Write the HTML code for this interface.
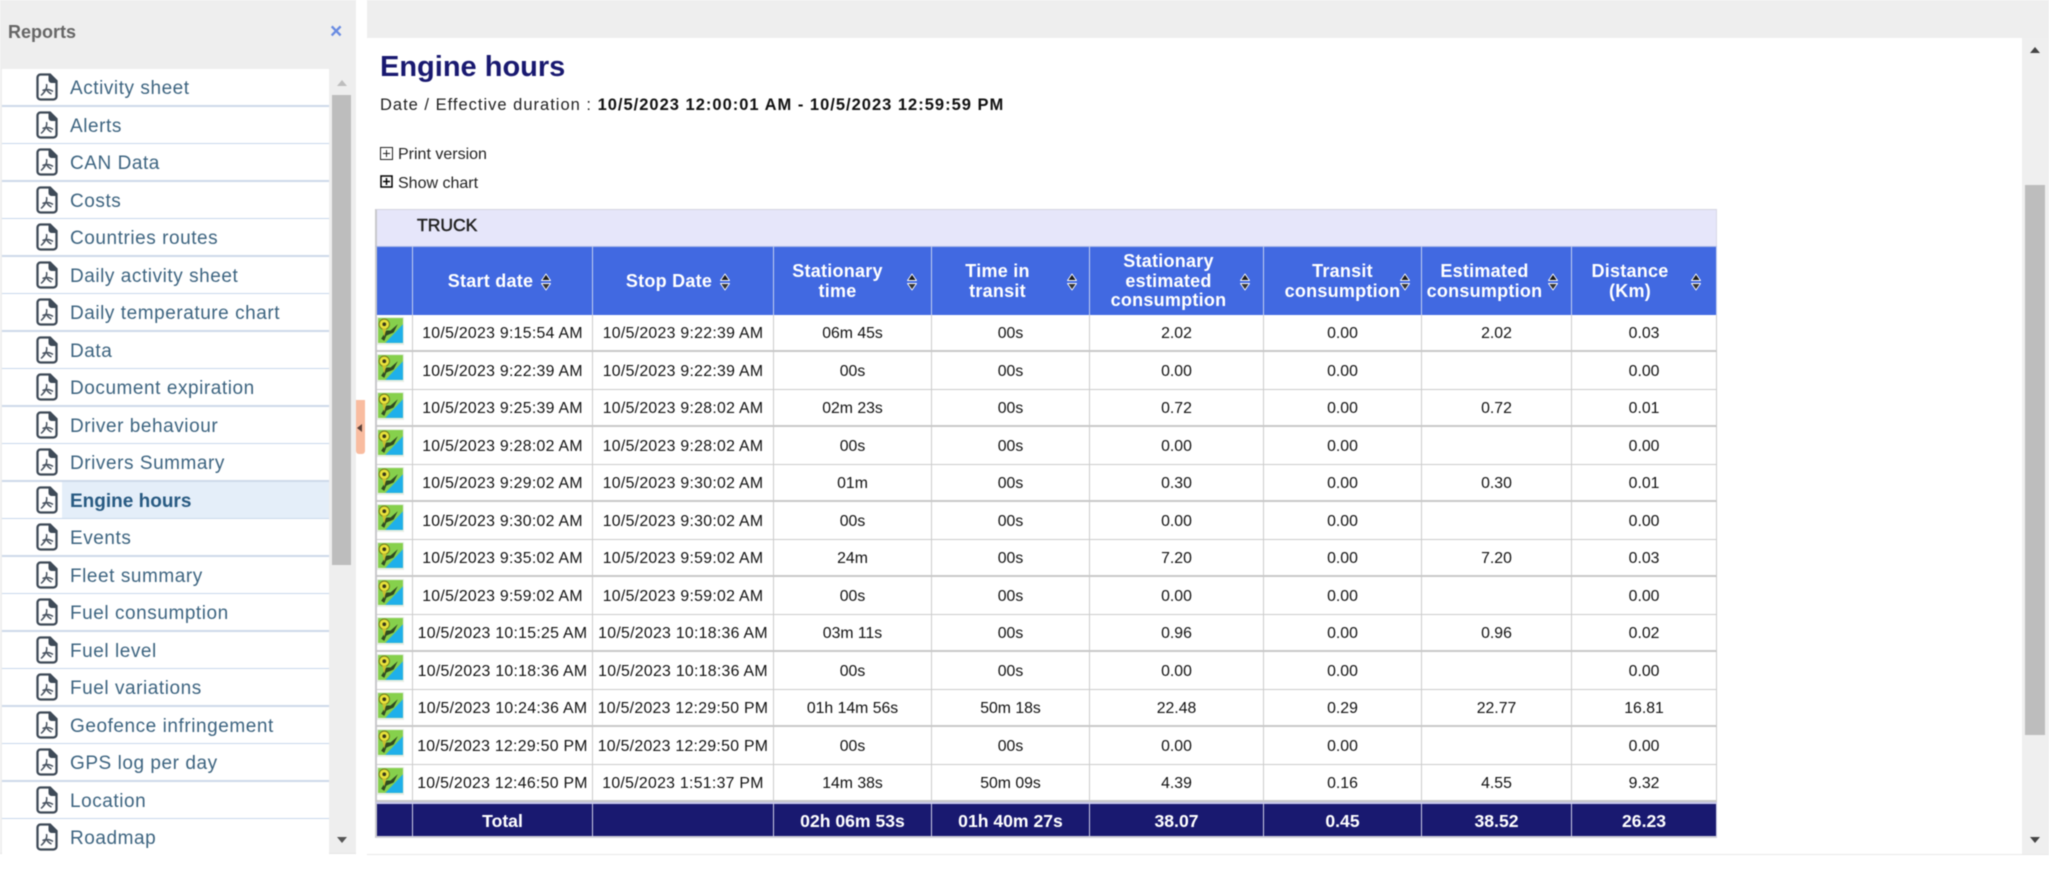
<!DOCTYPE html>
<html><head><meta charset="utf-8"><title>Engine hours</title>
<style>
*{box-sizing:border-box}
html,body{margin:0;padding:0;background:#fff}
body{width:2049px;height:879px;overflow:hidden;position:relative;font-family:"Liberation Sans",sans-serif}
.a{position:absolute}
#side{left:0;top:0;width:356px;height:854px;background:#eee;border-bottom:1px solid #e4e4e4}
#list{left:2px;top:69px;width:327px;height:785px;background:#fff;overflow:hidden}
.it{height:37.5px;position:relative;border-bottom:1px solid #c9d8ec;font-size:19px;line-height:39px;color:#3d6480;padding-left:68px;white-space:nowrap;letter-spacing:.55px}
.it:nth-child(odd){border-bottom:2px solid #cdd9ea}
.it svg{position:absolute;left:34px;top:4px;width:22px;height:28px}
.it.sel{background:linear-gradient(90deg,#fff 60px,#e4eef9 60px);font-weight:bold;color:#285a82;letter-spacing:0}
#top{left:367px;top:0;width:1682px;height:38px;background:#eee}
#sb2{left:2022px;top:38px;width:27px;height:816px;background:#efefef}
#bot{left:367px;top:854px;width:1682px;height:1px;background:#e8e8e8}
table{position:absolute;left:375px;top:209px;width:1342px;table-layout:fixed;border-collapse:separate;border-spacing:0;font-family:"Liberation Sans",sans-serif}
td,th{padding:0;text-align:center;font-size:15.8px;color:#111;white-space:nowrap;border-right:1px solid #ccc;position:relative;overflow:visible}
td:first-child,th:first-child{border-left:2px solid #c8c8cc}
td:nth-child(2),td:nth-child(3){letter-spacing:.3px}
tr.r1 td,tr.r2 td{padding-top:2px}
.g td{height:37px;background:#e6e6fa;text-align:left;font-weight:normal;border-right:1px solid #d8d8e6;border-top:1px solid #d4d4e0;font-size:17.5px;padding:0 0 6px 40px;color:#222;-webkit-text-stroke:.5px #222}
th{background:#4169e1;color:#fff;height:69px;font-size:18px;line-height:19.5px;letter-spacing:.25px;font-weight:bold;border-right:1px solid #c4d0ee;border-top:1px solid #aab8e4;padding-top:1px}
tr.t td{border-bottom:1px solid #ccc}
tr.u td{border-bottom:2px solid #c8c8c8}
tr.r1 td{height:37px}
tr.r2 td{height:38px}
tr.f td{height:36px;background:#191970;color:#fff;font-weight:bold;font-size:17.6px;letter-spacing:0;border-right:1px solid #cfcfe6;border-top:2px solid #c8c8ec;border-bottom:2px solid #d0d0d8;padding-top:2px}
.m{position:absolute;left:0;top:2px;width:27px;height:28px}
.s{position:absolute;top:26px;width:10px;height:18px}
.x{white-space:nowrap}
</style></head>
<body style="filter:blur(.4px)">
<svg width="0" height="0" style="position:absolute">
<symbol id="p" viewBox="0 0 22 28"><path d="M4.5 1.5H14L20.5 8V23.5A3 3 0 0 1 17.500 26.500H4.500A3 3 0 0 1 1.500 23.500V4.500A3 3 0 0 1 4.500 1.500Z" fill="#fff" stroke="#3e4a57" stroke-width="2.300"/><path d="M13.500 1.500V7A2 2 0 0 0 15.500 9H20.500" fill="#3e4a57" stroke="#3e4a57" stroke-width="2"/><path d="M10.500 11C11.500 15 9.500 18.500 5 22.500M6.500 17.500C10 16 14 16.500 17 18.500M10 15C11 18 13 20 15.500 21" fill="none" stroke="#4a5562" stroke-width="1.500"/></symbol>
<symbol id="m" viewBox="0 0 26 27"><rect width="26" height="27" fill="#e8eee6"/><rect x="1" y="1" width="24" height="24" fill="#86d04c"/><path d="M25 7V25H8Z" fill="#1fb0ea"/><path d="M4 21L9 13L13 13L20 7L16 15L9 18L7 23Z" fill="#2f4a20"/><circle cx="7" cy="7" r="5" fill="#e8e23a" stroke="#77801c"/><circle cx="7" cy="7" r="1.800" fill="#3a3a1a"/><path d="M5 11L7 19L9 11Z" fill="#c8c030"/></symbol>
<symbol id="s" viewBox="0 0 10 18"><path d="M5 1L9.500 7.500H.5Z" fill="#1c1c1c" stroke="#fff" stroke-width=".9" stroke-linejoin="round"/><path d="M5 17L9.500 10.500H.5Z" fill="#333" stroke="#fff" stroke-width=".9" stroke-linejoin="round"/></symbol>
</svg>

<div class="a" id="side"></div>
<div class="a" style="left:8px;top:22px;font-size:18px;font-weight:bold;color:#666">Reports</div>
<div class="a" style="left:330px;top:19px;font-size:21px;font-weight:bold;color:#6a8ce2;line-height:26px">×</div>
<div class="a" id="list">
<div class="it"><svg><use href="#p"/></svg>Activity sheet</div>
<div class="it"><svg><use href="#p"/></svg>Alerts</div>
<div class="it"><svg><use href="#p"/></svg>CAN Data</div>
<div class="it"><svg><use href="#p"/></svg>Costs</div>
<div class="it"><svg><use href="#p"/></svg>Countries routes</div>
<div class="it"><svg><use href="#p"/></svg>Daily activity sheet</div>
<div class="it"><svg><use href="#p"/></svg>Daily temperature chart</div>
<div class="it"><svg><use href="#p"/></svg>Data</div>
<div class="it"><svg><use href="#p"/></svg>Document expiration</div>
<div class="it"><svg><use href="#p"/></svg>Driver behaviour</div>
<div class="it"><svg><use href="#p"/></svg>Drivers Summary</div>
<div class="it sel"><svg><use href="#p"/></svg>Engine hours</div>
<div class="it"><svg><use href="#p"/></svg>Events</div>
<div class="it"><svg><use href="#p"/></svg>Fleet summary</div>
<div class="it"><svg><use href="#p"/></svg>Fuel consumption</div>
<div class="it"><svg><use href="#p"/></svg>Fuel level</div>
<div class="it"><svg><use href="#p"/></svg>Fuel variations</div>
<div class="it"><svg><use href="#p"/></svg>Geofence infringement</div>
<div class="it"><svg><use href="#p"/></svg>GPS log per day</div>
<div class="it"><svg><use href="#p"/></svg>Location</div>
<div class="it"><svg><use href="#p"/></svg>Roadmap</div>
</div>
<div class="a" style="left:332px;top:95px;width:19px;height:470px;background:#bdbdbd"></div>
<svg class="a" style="left:336px;top:79px" width="12" height="8"><path d="M6 1L11 7H1Z" fill="#bdbdbd"/></svg>
<svg class="a" style="left:336px;top:836px" width="12" height="8"><path d="M6 7L11 1H1Z" fill="#555"/></svg>
<div class="a" style="left:356px;top:400px;width:9px;height:54px;background:#f9bca0;border-radius:0 0 3px 3px"></div>
<svg class="a" style="left:356px;top:422px" width="8" height="12"><path d="M1 6L6 2V10Z" fill="#5a4038"/></svg>

<div class="a" id="top"></div>
<div class="a" id="sb2"></div>
<div class="a" style="left:2025px;top:185px;width:20px;height:550px;background:#bdbdbd"></div>
<svg class="a" style="left:2029px;top:46px" width="12" height="8"><path d="M6 1L11 7H1Z" fill="#444"/></svg>
<svg class="a" style="left:2029px;top:836px" width="12" height="8"><path d="M6 7L11 1H1Z" fill="#444"/></svg>
<div class="a" id="bot"></div>

<div class="a" style="left:380px;top:50px;font-size:29px;line-height:34px;font-weight:bold;color:#191970;white-space:nowrap">Engine hours</div>
<div class="a x" style="left:380px;top:96px;font-size:16.500px;line-height:18px;color:#222;letter-spacing:1px">Date / Effective duration : <b style="color:#111">10/5/2023 12:00:01 AM - 10/5/2023 12:59:59 PM</b></div>

<svg class="a" style="left:380px;top:147px" width="13" height="13"><path d="M.5 .5H12.500V12.500H.5Z M3 6.500H10 M6.500 3V10" fill="none" stroke="#222"/></svg>
<div class="a x" style="left:398px;top:146px;font-size:16px;line-height:17px;color:#222">Print version</div>
<svg class="a" style="left:380px;top:175px" width="13" height="13"><path d="M1 1H12V12H1Z M3 6.500H10 M6.500 3V10" fill="none" stroke="#000" stroke-width="1.500"/></svg>
<div class="a x" style="left:398px;top:175px;font-size:16px;line-height:17px;color:#222">Show chart</div>

<table>
<colgroup><col style="width:38px"><col style="width:180px"><col style="width:181px"><col style="width:158px"><col style="width:158px"><col style="width:174px"><col style="width:158px"><col style="width:150px"><col style="width:145px"></colgroup>
<tr class="g"><td colspan="9">TRUCK</td></tr>
<tr>
<th></th>
<th style="padding-right:24px">Start date<svg class="s" style="left:128px"><use href="#s"/></svg></th>
<th style="padding-right:28px">Stop Date<svg class="s" style="left:127px"><use href="#s"/></svg></th>
<th style="padding-right:30px">Stationary<br>time<svg class="s" style="left:133px"><use href="#s"/></svg></th>
<th style="padding-right:26px">Time in<br>transit<svg class="s" style="left:135px"><use href="#s"/></svg></th>
<th style="padding-right:16px">Stationary<br>estimated<br>consumption<svg class="s" style="left:150px"><use href="#s"/></svg></th>
<th>Transit<br>consumption<svg class="s" style="left:136px"><use href="#s"/></svg></th>
<th style="padding-right:24px">Estimated<br>consumption<svg class="s" style="left:126px"><use href="#s"/></svg></th>
<th style="padding-right:28px">Distance<br>(Km)<svg class="s" style="left:119px"><use href="#s"/></svg></th>
</tr>
<tr class="r1 u"><td><svg class="m"><use href="#m"/></svg></td><td>10/5/2023 9:15:54 AM</td><td>10/5/2023 9:22:39 AM</td><td>06m 45s</td><td>00s</td><td>2.02</td><td>0.00</td><td>2.02</td><td>0.03</td></tr>
<tr class="r2 t"><td><svg class="m"><use href="#m"/></svg></td><td>10/5/2023 9:22:39 AM</td><td>10/5/2023 9:22:39 AM</td><td>00s</td><td>00s</td><td>0.00</td><td>0.00</td><td></td><td>0.00</td></tr>
<tr class="r1 u"><td><svg class="m"><use href="#m"/></svg></td><td>10/5/2023 9:25:39 AM</td><td>10/5/2023 9:28:02 AM</td><td>02m 23s</td><td>00s</td><td>0.72</td><td>0.00</td><td>0.72</td><td>0.01</td></tr>
<tr class="r2 t"><td><svg class="m"><use href="#m"/></svg></td><td>10/5/2023 9:28:02 AM</td><td>10/5/2023 9:28:02 AM</td><td>00s</td><td>00s</td><td>0.00</td><td>0.00</td><td></td><td>0.00</td></tr>
<tr class="r1 u"><td><svg class="m"><use href="#m"/></svg></td><td>10/5/2023 9:29:02 AM</td><td>10/5/2023 9:30:02 AM</td><td>01m</td><td>00s</td><td>0.30</td><td>0.00</td><td>0.30</td><td>0.01</td></tr>
<tr class="r2 t"><td><svg class="m"><use href="#m"/></svg></td><td>10/5/2023 9:30:02 AM</td><td>10/5/2023 9:30:02 AM</td><td>00s</td><td>00s</td><td>0.00</td><td>0.00</td><td></td><td>0.00</td></tr>
<tr class="r1 u"><td><svg class="m"><use href="#m"/></svg></td><td>10/5/2023 9:35:02 AM</td><td>10/5/2023 9:59:02 AM</td><td>24m</td><td>00s</td><td>7.20</td><td>0.00</td><td>7.20</td><td>0.03</td></tr>
<tr class="r2 t"><td><svg class="m"><use href="#m"/></svg></td><td>10/5/2023 9:59:02 AM</td><td>10/5/2023 9:59:02 AM</td><td>00s</td><td>00s</td><td>0.00</td><td>0.00</td><td></td><td>0.00</td></tr>
<tr class="r1 u"><td><svg class="m"><use href="#m"/></svg></td><td>10/5/2023 10:15:25 AM</td><td>10/5/2023 10:18:36 AM</td><td>03m 11s</td><td>00s</td><td>0.96</td><td>0.00</td><td>0.96</td><td>0.02</td></tr>
<tr class="r2 t"><td><svg class="m"><use href="#m"/></svg></td><td>10/5/2023 10:18:36 AM</td><td>10/5/2023 10:18:36 AM</td><td>00s</td><td>00s</td><td>0.00</td><td>0.00</td><td></td><td>0.00</td></tr>
<tr class="r1 u"><td><svg class="m"><use href="#m"/></svg></td><td>10/5/2023 10:24:36 AM</td><td>10/5/2023 12:29:50 PM</td><td>01h 14m 56s</td><td>50m 18s</td><td>22.48</td><td>0.29</td><td>22.77</td><td>16.81</td></tr>
<tr class="r2 t"><td><svg class="m"><use href="#m"/></svg></td><td>10/5/2023 12:29:50 PM</td><td>10/5/2023 12:29:50 PM</td><td>00s</td><td>00s</td><td>0.00</td><td>0.00</td><td></td><td>0.00</td></tr>
<tr class="r1 u"><td><svg class="m"><use href="#m"/></svg></td><td>10/5/2023 12:46:50 PM</td><td>10/5/2023 1:51:37 PM</td><td>14m 38s</td><td>50m 09s</td><td>4.39</td><td>0.16</td><td>4.55</td><td>9.32</td></tr>
<tr class="f"><td></td><td>Total</td><td></td><td>02h 06m 53s</td><td>01h 40m 27s</td><td>38.07</td><td>0.45</td><td>38.52</td><td>26.23</td></tr>
</table>
</body></html>
